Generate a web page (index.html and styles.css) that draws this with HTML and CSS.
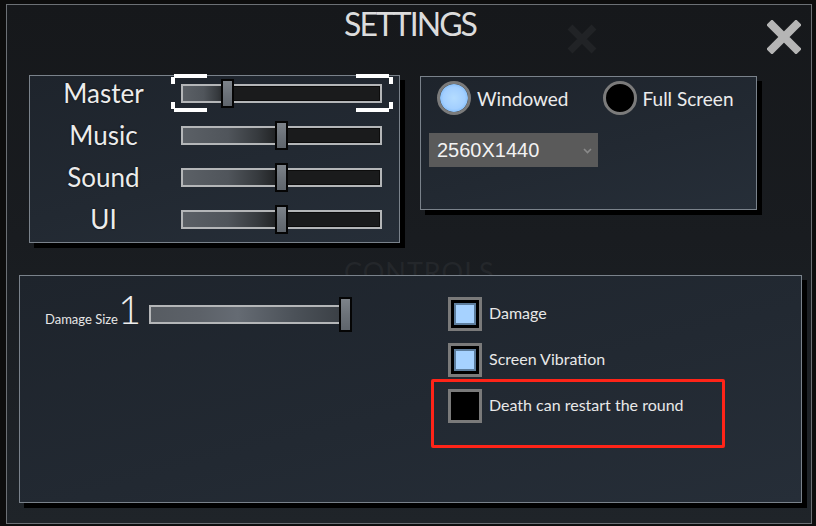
FILE: index.html
```html
<!DOCTYPE html>
<html lang="en">
<head>
<meta charset="utf-8">
<title>Settings</title>
<link rel="stylesheet" href="styles.css">
</head>
<body>
<div class="window">
  <!-- faded layer of the screen behind the dialog -->
  <div class="ghost ghost-x" aria-hidden="true">
    <svg width="32" height="32" viewBox="0 0 32 32"><path d="M4 4 L28 28 M28 4 L4 28" stroke="#212326" stroke-width="7"/></svg>
  </div>
  <div class="ghost ghost-title" aria-hidden="true">CONTROLS</div>

  <header class="titlebar">
    <h1 class="title">SETTINGS</h1>
    <button class="close" aria-label="Close">
      <svg width="34" height="34" viewBox="0 0 34 34"><path d="M5 5 L29 29 M29 5 L5 29" stroke="#b5b5b5" stroke-width="8" stroke-linecap="square"/></svg>
    </button>
  </header>

  <div class="top-row">
    <section class="panel volume">
      <div class="vol-row">
        <span class="vol-label">Master</span>
        <div class="slider focused">
          <div class="track"><div class="fill" style="width: 46px"></div></div>
          <div class="thumb" style="left: 40px"></div>
          <svg class="focus" width="222" height="38" viewBox="0 0 222 38">
            <g fill="#ffffff">
              <rect x="3" y="0" width="33" height="4"/>
              <rect x="0" y="3" width="4" height="7"/>
              <rect x="0" y="28" width="4" height="7"/>
              <rect x="3" y="34" width="33" height="4"/>
              <rect x="185" y="0" width="33" height="4"/>
              <rect x="218" y="3" width="4" height="7"/>
              <rect x="218" y="28" width="4" height="7"/>
              <rect x="185" y="34" width="33" height="4"/>
            </g>
          </svg>
        </div>
      </div>
      <div class="vol-row">
        <span class="vol-label">Music</span>
        <div class="slider">
          <div class="track"><div class="fill" style="width: 100px"></div></div>
          <div class="thumb" style="left: 94px"></div>
        </div>
      </div>
      <div class="vol-row">
        <span class="vol-label">Sound</span>
        <div class="slider">
          <div class="track"><div class="fill" style="width: 100px"></div></div>
          <div class="thumb" style="left: 94px"></div>
        </div>
      </div>
      <div class="vol-row">
        <span class="vol-label">UI</span>
        <div class="slider">
          <div class="track"><div class="fill" style="width: 100px"></div></div>
          <div class="thumb" style="left: 94px"></div>
        </div>
      </div>
    </section>

    <section class="panel display">
      <div class="radio-row">
        <label class="radio-opt"><span class="radio checked"></span><span class="radio-text">Windowed</span></label>
        <label class="radio-opt"><span class="radio"></span><span class="radio-text">Full Screen</span></label>
      </div>
      <div class="dropdown">
        <span class="dropdown-value">2560X1440</span>
        <svg class="chevron" width="9" height="6" viewBox="0 0 9 6"><path d="M1 1 L4.5 4.5 L8 1" fill="none" stroke="#8a8a8a" stroke-width="1.6"/></svg>
      </div>
    </section>
  </div>

  <section class="panel controls">
    <div class="controls-left">
      <div class="dmg-row">
        <div class="dmg-label"><span class="dmg-name">Damage Size</span><span class="dmg-value">1</span></div>
        <div class="slider long">
          <div class="track"><div class="fill full"></div></div>
          <div class="thumb tall" style="left: 190px"></div>
        </div>
      </div>
    </div>
    <div class="controls-right">
      <div class="check-row">
        <span class="checkbox checked"></span><span class="check-text">Damage</span>
      </div>
      <div class="check-row">
        <span class="checkbox checked"></span><span class="check-text">Screen Vibration</span>
      </div>
      <div class="check-row marked">
        <span class="checkbox"></span><span class="check-text">Death can restart the round</span>
      </div>
    </div>
  </section>
</div>
</body>
</html>
```

FILE: styles.css
```css
* { box-sizing: border-box; }

html, body {
  margin: 0;
  padding: 0;
}

body {
  width: 816px;
  height: 526px;
  overflow: hidden;
  background: #0d0d0d;
  font-family: Lato, "Noto Sans", sans-serif;
  color: #e6e6e6;
  padding: 4px 0 0 6px;
}

.window {
  position: relative;
  width: 806px;
  height: 520px;
  border: 1px solid #6c7075;
  background: linear-gradient(180deg, #16181b 0%, #191c20 45%, #1f2429 100%);
}

/* faded background layer */
.ghost {
  position: absolute;
  z-index: 0;
}
.ghost-x {
  left: 559px;
  top: 18px;
}
.ghost-title {
  left: 337px;
  top: 250px;
  font-size: 27px;
  letter-spacing: 1px;
  color: #24272b;
}

/* title bar */
.titlebar {
  position: relative;
  z-index: 1;
  height: 70px;
}
.title {
  margin: 0;
  text-align: center;
  font-size: 32px;
  font-weight: 400;
  letter-spacing: -2px;
  line-height: 38px;
  color: #dcdcdc;
  padding-left: 2px;
}
.close {
  position: absolute;
  right: 10px;
  top: 15px;
  width: 34px;
  height: 34px;
  padding: 0;
  border: 0;
  background: none;
  display: block;
}
.close svg { display: block; }

/* panels */
.panel {
  position: relative;
  z-index: 1;
  border: 1px solid #7a828b;
  background: linear-gradient(165deg, #1e242c 0%, #222932 55%, #262e38 100%);
  box-shadow: 5px 5px 0 #000;
}

.top-row {
  display: flex;
  align-items: flex-start;
  gap: 20px;
  padding-left: 22px;
}

/* volume */
.volume {
  width: 371px;
  height: 168px;
  display: flex;
  flex-direction: column;
  gap: 8px;
}
.vol-row {
  height: 34px;
  display: flex;
  align-items: center;
}
.vol-label {
  width: 147px;
  text-align: center;
  font-size: 26px;
  color: #ececec;
  text-shadow: 0 0 2px rgba(0,0,0,0.8);
}

.slider {
  position: relative;
  width: 201px;
  height: 19px;
  margin-left: 4px;
}
.track {
  position: absolute;
  inset: 0;
  border: 2px solid #b4b6b8;
  background: #1a1b1c;
  box-shadow: inset 0 0 0 1px #0c0c0c;
  overflow: hidden;
}
.fill {
  height: 100%;
  background: linear-gradient(90deg, #5b6066 0%, #50555b 45%, #363a3e 75%, #1a1b1c 100%);
}
.fill.full {
  width: 100%;
  background: linear-gradient(90deg, #575c62 0%, #5c6168 25%, #656b73 45%, #4b5158 75%, #3a3f45 100%);
}
.thumb {
  position: absolute;
  top: -5px;
  width: 13px;
  height: 29px;
  border: 2px solid #050505;
  background: linear-gradient(180deg, #7d838a 0%, #6c7279 50%, #5f656c 100%);
}
.thumb.tall {
  top: -8px;
  height: 35px;
}
.focus {
  position: absolute;
  left: -10px;
  top: -10px;
}

/* display */
.display {
  width: 337px;
  height: 134px;
  margin-top: 1px;
  padding: 4px 0 0 16px;
}
.radio-row {
  display: flex;
  align-items: center;
  gap: 34px;
}
.radio-opt {
  display: flex;
  align-items: center;
  gap: 6px;
}
.radio {
  width: 34px;
  height: 34px;
  border-radius: 50%;
  border: 3px solid #7b7b7b;
  background: #000;
}
.radio.checked {
  background: radial-gradient(circle, #b4dcff 0%, #a3cfff 55%, #8ec3fb 68%, #000 74%);
}
.radio-text {
  font-size: 19px;
  color: #ececec;
}
.dropdown {
  margin: 18px 0 0 -8px;
  width: 169px;
  height: 34px;
  background: #5a5a5a;
  display: flex;
  align-items: center;
  padding-left: 8px;
  position: relative;
}
.dropdown-value {
  font-family: "Liberation Sans", Arial, sans-serif;
  font-size: 20px;
  color: #f2f2f2;
}
.chevron {
  position: absolute;
  right: 6px;
  top: 15px;
}

/* controls */
.controls {
  width: 783px;
  height: 228px;
  margin: 32px 0 0 12px;
  display: flex;
}
.controls-left {
  width: 428px;
  padding: 21px 0 0 25px;
}
.dmg-row {
  display: flex;
  align-items: center;
  height: 35px;
}
.dmg-label {
  width: 104px;
  display: flex;
  align-items: baseline;
  line-height: 40px;
  margin-top: -2px;
}
.dmg-name {
  font-size: 13px;
  color: #e6e6e6;
}
.dmg-value {
  font-size: 40px;
  font-weight: 300;
  color: #eeeeee;
  margin-left: 0;
}
.slider.long {
  width: 196px;
  margin-left: 0;
}

.controls-right {
  padding-top: 21px;
  display: flex;
  flex-direction: column;
  gap: 12px;
}
.check-row {
  display: flex;
  align-items: center;
  gap: 7px;
  height: 34px;
  position: relative;
}
.checkbox {
  width: 34px;
  height: 34px;
  border: 3px solid #7a7a7a;
  background: #000;
}
.checkbox.checked {
  background: #a6d2ff;
  box-shadow: inset 0 0 0 3px #000, inset 0 0 0 5px #5d7d9c;
}
.check-text {
  font-size: 16px;
  color: #e8e8e8;
  margin-top: -4px;
}
.check-row.marked::after {
  content: "";
  position: absolute;
  left: -17px;
  top: -10px;
  width: 288px;
  height: 63px;
  border: 3px solid #ff2418;
  border-radius: 2px;
}
```
